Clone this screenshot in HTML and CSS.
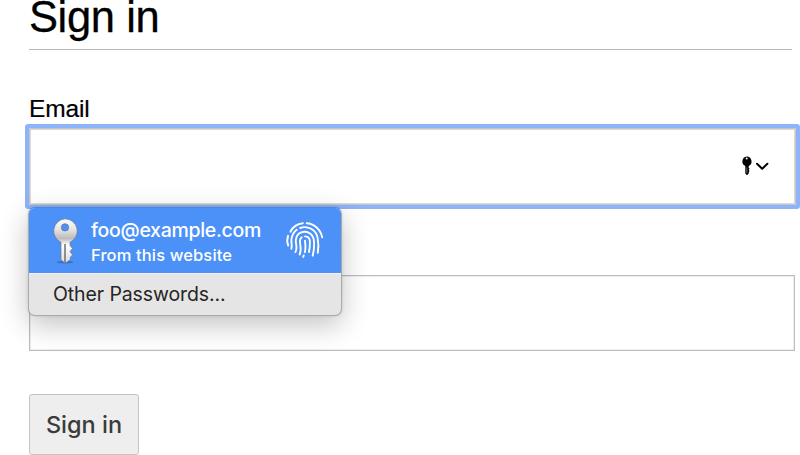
FILE: index.html
```html
<!DOCTYPE html>
<html lang="en">
<head>
<meta charset="utf-8">
<title>Sign in</title>
<link rel="stylesheet" href="styles.css">
</head>
<body>
<form class="form">
  <h1 class="title">Sign in</h1>
  <label class="label">Email</label>
  <div class="field focused">
    <svg class="autofill" width="30" height="20" viewBox="0 0 30 20">
      <path fill="#000" fill-rule="evenodd" d="M6.7 .5a5 5 0 0 1 2 9.5v1.7l.9 1-.9 1 .9 1.2-.9 1 .2 1.3-1.9 2-1.7-1.7v-7.5A5 5 0 0 1 6.7 .5Zm0 1.1a1 1 0 1 0 .01 2a1 1 0 1 0-.01-2Z"/>
      <path d="M6.8 11.5v5.5" stroke="#999" stroke-width=".7"/>
      <path d="m17 7.8 5.2 5 5.2-5" fill="none" stroke="#000" stroke-width="2" stroke-linecap="round" stroke-linejoin="round"/>
    </svg>
    <div class="menu">
      <div class="account">
        <svg class="key" width="28" height="48" viewBox="0 0 28 48">
          <defs>
            <linearGradient id="metal" x1="0" y1="0" x2="0" y2="1">
              <stop offset="0" stop-color="#fff"/><stop offset=".25" stop-color="#e4e4e4"/>
              <stop offset=".45" stop-color="#bbb"/><stop offset=".6" stop-color="#fff"/><stop offset="1" stop-color="#ddd"/>
            </linearGradient>
          </defs>
          <ellipse cx="14" cy="45.2" rx="8.5" ry="1.2" fill="#244b80" opacity=".45"/>
          <path fill="url(#metal)" stroke="#6e7988" stroke-width=".7" fill-rule="evenodd" d="M14 1.8a12.3 12.3 0 0 1 5 23.5v3.2l2.5 3-2.5 3 2.5 3.3-2.2 2.5v2.2L15.3 45.5h-2L10 42.8V25.3A12.3 12.3 0 0 1 14 1.8Zm0 4.9a3.7 3.7 0 1 0 .01 7.4a3.7 3.7 0 1 0-.01-7.4Z"/>
          <path d="M14 27v18" stroke="#666" stroke-width="1.4"/>
        </svg>
        <div class="details">
          <div class="user">foo@example.com</div>
          <div class="source">From this website</div>
        </div>
        <svg class="finger" width="40" height="40" viewBox="0 0 40 40" fill="none" stroke="#fff" stroke-width="1.9" stroke-linecap="round">
          <path d="M5.4 11.7C8.1 6.5 12.3 3.9 17.8 3.3M21.7 3.3C28.5 3.6 35.5 9 37.2 17.4"/>
          <path d="M3.1 15.8C1.9 19.3 2.1 22.7 3.2 25.6"/>
          <path d="M6.4 28.8C7.5 25 5.7 22 6.6 18.3C7.4 14.5 9 11.6 11.7 9.7M15.1 8C22.6 5.2 31.1 9.6 32.6 17.8C33.7 23.4 33.7 27.8 32.8 32.8"/>
          <path d="M10.4 32.1C12.8 27.6 10.6 24.4 10.8 20.5C11.1 16.7 12.9 13.9 15.7 12.7C21.4 10 27.7 13.4 28.7 19.4C29.5 24.7 29.1 30.3 27.7 35.7"/>
          <path d="M14.6 34.5C17.1 29 14.8 24.7 14.9 21C15 19.3 15.7 18.1 16.8 17.3M20 16.4C23.2 16.5 24.8 18.3 24.9 21.6C25 25.7 24.7 28.5 24 32"/>
          <path d="M20 20.7C20.3 25.3 21.1 28.3 19.8 32.2M18.7 35.5L18.2 36.9"/>
        </svg>
      </div>
      <div class="other">Other Passwords...</div>
    </div>
  </div>
  <div class="field password"></div>
  <button class="submit" type="button">Sign in</button>
</form>
</body>
</html>
```
FILE: styles.css
```css
* { box-sizing: border-box; }
body {
  margin: 0;
  overflow: hidden;
  background: #fff;
  color: #000;
  font-family: "Liberation Sans", sans-serif;
}
.form { width: 766.5px; margin-left: 29px; }
.title {
  width: 763px;
  height: 50px;
  margin: 0 0 45px;
  border-bottom: 1px solid #b9b9b9;
  font-size: 43.5px;
  font-weight: 400;
  letter-spacing: -.4px;
  line-height: 35px;
  -webkit-text-stroke: .3px #000;
}
.label {
  display: block;
  height: 33px;
  font-size: 24.5px;
  letter-spacing: -.15px;
  line-height: 28px;
  -webkit-text-stroke: .2px #000;
}
.field {
  position: relative;
  height: 76px;
  border: 1px solid #bdbdbd;
  box-shadow: inset 0 0 0 1px #ededed;
}
.focused {
  display: flex;
  height: 77px;
  align-items: center;
  justify-content: flex-end;
  padding: 0 25px 2px 0;
  border-color: #c5c5c5;
  box-shadow: 0 0 0 4px #8bb4fb, inset 0 0 0 1px #dedad3;
  border-radius: 1px;
}
.password { width: 766px; margin-top: 70px; }
.menu {
  position: absolute;
  z-index: 1;
  top: 78px;
  left: -2px;
  width: 314px;
  height: 109px;
  overflow: hidden;
  border: 1px solid #aaa;
  border-top-color: #4d88da;
  border-radius: 7px;
  background: #e5e5e5;
  box-shadow: 0 9px 28px rgba(0,0,0,.24), 0 0 3px rgba(0,0,0,.12);
  font-family: Inter, sans-serif;
}
.account {
  display: flex;
  height: 65px;
  padding-left: 22px;
  background: #4b91f8;
  color: #fff;
}
.key { flex: none; margin-top: 9px; }
.details {
  flex: none;
  width: 206px;
  padding: 10px 0 0 12px;
  white-space: nowrap;
  font-weight: 500;
}
.user { font-size: 19.5px; line-height: 25px; letter-spacing: -.3px; }
.source { font-size: 16.5px; line-height: 25px; letter-spacing: .13px; }
.finger { flex: none; margin-top: 12px; }
.other {
  height: 42px;
  padding-left: 24px;
  border-top: 1px solid #f1f1f1;
  color: #262626;
  font-size: 19.5px;
  letter-spacing: -.1px;
  line-height: 41px;
}
.submit {
  display: block;
  width: 110px;
  height: 61px;
  margin-top: 43px;
  padding: 0;
  border: 1px solid #c4c4c4;
  border-radius: 3px;
  background: #eee;
  color: #3b3b3b;
  font: 500 23.5px/59px Inter, sans-serif;
}
```
